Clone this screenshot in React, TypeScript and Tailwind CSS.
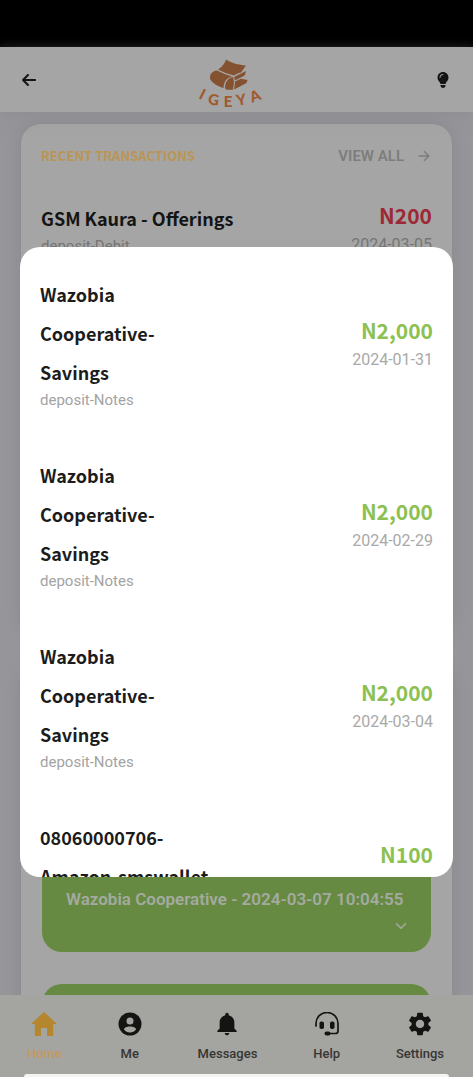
import React from "react";
import { IoArrowForward, IoChevronDown } from "react-icons/io5";
import { IoMdHome, IoMdNotifications } from "react-icons/io";
import { FaArrowLeft, FaLightbulb } from "react-icons/fa6";
import { MdSettings } from "react-icons/md";

type Transaction = {
  id: number;
  title: string;
  note?: string;
  amount: string;
  date?: string;
};

const transactions: Transaction[] = [
  { id: 1, title: "Wazobia Cooperative-Savings", note: "deposit-Notes", amount: "N2,000", date: "2024-01-31" },
  { id: 2, title: "Wazobia Cooperative-Savings", note: "deposit-Notes", amount: "N2,000", date: "2024-02-29" },
  { id: 3, title: "Wazobia Cooperative-Savings", note: "deposit-Notes", amount: "N2,000", date: "2024-03-04" },
  { id: 4, title: "08060000706-Amazon-smswallet", amount: "N100" },
];

function Logo() {
  return (
    <svg viewBox="0 0 66 54" className="h-[54px] w-[66px]" role="img" aria-label="Igeya">
      <path d="M29 4.500 C34 8 42 10 49 10.500 C47 13 46 15 44 17.500 C41 18 39 19 37 20.500 C31 19 26 17 21 14.500 C25 12 28 8 29 4.500Z" fill="#845230" />
      <path d="M20 15.500 C25 18 30 20 35 21.500 C29 23 27 27 26.500 33 C20 31 16 28 13.500 25 C11.500 20 15 16 20 15.500Z" fill="#845230" />
      <path d="M37 22 L49 16 L48 20 L43 23.500 L50.500 25 L49.500 28 L38 34 C33 35.500 28 35 28 33 C28 27 31 22.500 37 22Z" fill="#845230" />
      <path d="M36.500 22 C38 25 37.500 30 36.500 34.500 M38 26 L43 23.500 L50 20.500" fill="none" stroke="#aaa49f" strokeWidth="1.100" />
      <g fill="#a05a30" fontFamily="Lato, sans-serif" fontWeight="900" fontSize="15" textAnchor="middle">
        <text transform="translate(3 44) rotate(27)">I</text>
        <text transform="translate(16 50) rotate(8)">G</text>
        <text transform="translate(31 52)">E</text>
        <text transform="translate(45 50) rotate(-10)">Y</text>
        <text transform="translate(60 46) rotate(-20)">A</text>
      </g>
    </svg>
  );
}

function AccountIcon() {
  return (
    <svg viewBox="0 0 24 24" className="size-6">
      <circle cx="12" cy="12" r="11.5" fill="currentColor" />
      <circle cx="12" cy="9" r="3.5" fill="#a4a4a1" />
      <path d="M12 14.500c-3.200 0-6 1.200-6 2.900 1.400 2 3.500 3 6 3s4.600-1 6-3c0-1.700-2.800-2.900-6-2.900z" fill="#a4a4a1" />
    </svg>
  );
}

function HeadsetIcon() {
  return (
    <svg viewBox="0 0 24 24" className="size-6" fill="none" stroke="currentColor" strokeWidth="1.700" strokeLinecap="round">
      <path d="M1 14v-2.500a10.500 10.500 0 0 1 22 0V19q0 2.500-2.500 2.500H13" />
      <rect x="4.500" y="9.500" width="4.500" height="7.500" rx="1.800" fill="currentColor" stroke="none" />
      <rect x="15" y="9.500" width="4.500" height="7.500" rx="1.800" fill="currentColor" stroke="none" />
      <rect x="9.500" y="19.500" width="6" height="4" rx="2" fill="currentColor" stroke="none" />
    </svg>
  );
}

const heading = "font-['Noto_Sans_CJK_SC','Noto_Sans',sans-serif] font-bold";

function TransactionRow({ item }: { item: Transaction }) {
  return (
    <li className="flex items-center justify-between">
      <div className="w-[45%]">
        <h3 className={`${heading} text-[18px] leading-[39px] text-[#1c1c1c]`}>{item.title}</h3>
        <p className="h-4 text-[15px] leading-4 text-[#a3a3a3]">{item.note}</p>
      </div>
      <div className="pt-1 text-right">
        <p className={`${heading} text-[21px] leading-8 text-[#8cc152]`}>{item.amount}</p>
        <p className="mt-0.5 h-6 text-[16px] leading-6 text-[#a9a9a9]">{item.date}</p>
      </div>
    </li>
  );
}

const tabs = [
  { label: "Home", icon: <IoMdHome className="size-8" />, active: true },
  { label: "Me", icon: <AccountIcon /> },
  { label: "Messages", icon: <IoMdNotifications className="size-7" /> },
  { label: "Help", icon: <HeadsetIcon /> },
  { label: "Settings", icon: <MdSettings className="size-7" /> },
];

export default function App() {
  return (
    <div className="relative flex h-screen flex-col overflow-hidden bg-[#96959a] font-[Roboto,sans-serif]">
      <div className="z-10 h-[47px] shrink-0 bg-black" />
      <header className="z-10 flex h-[65px] shrink-0 items-center justify-between bg-[#a5a5a5] pr-[22px] pl-[21px] text-[#141414] shadow-[0_4px_12px_#8c8b9099]">
        <button aria-label="Back" className="flex w-6 items-center"><FaArrowLeft className="size-4" /></button>
        <div className="pt-1"><Logo /></div>
        <button aria-label="Tips" className="flex w-9 items-center justify-end"><FaLightbulb className="size-4" /></button>
      </header>

      <main className="flex min-h-0 flex-1 flex-col gap-8 overflow-hidden px-[21px] pt-3">
        <section className="h-[510px] shrink-0 rounded-[20px] bg-[#a5a5a5] px-5 pt-5 shadow-[0_0_16px_#88878c]">
          <div className="flex items-center justify-between">
            <h2 className={`${heading} text-[13px] leading-6 text-[#bb9553]`}>RECENT TRANSACTIONS</h2>
            <a href="#all" className="flex items-center gap-3 text-[15px] leading-6 font-semibold text-[#7d7d7d]">
              VIEW ALL <IoArrowForward className="size-4" />
            </a>
          </div>
          <div className="mt-[31px] flex justify-between">
            <div>
              <h3 className={`${heading} text-[18px] leading-[39px] text-[#141414]`}>GSM Kaura - Offerings</h3>
              <p className="text-[15px] leading-4 text-[#757575]">deposit-Debit</p>
            </div>
            <div className="text-right">
              <p className={`${heading} text-[21px] leading-8 text-[#9c2935]`}>N200</p>
              <p className="mt-0.5 text-[16px] leading-6 text-[#757575]">2024-03-05</p>
            </div>
          </div>
        </section>

        <section className="shrink-0 rounded-[20px] bg-[#a5a5a5] px-[21px] pt-[187px] shadow-[0_0_16px_#88878c]">
          <div className="flex flex-col gap-8">
            <button className="flex flex-col rounded-[20px] bg-[#668a42] pt-8 pr-[22px] pb-[18px] pl-6 text-left text-[17px] leading-7 font-semibold text-[#a5aaa0]">
              <span>Wazobia Cooperative - 2024-03-07 10:04:55</span>
              <IoChevronDown className="mt-[5px] size-4 self-end" />
            </button>
            <div className="h-24 rounded-[20px] bg-[#668a42]" />
          </div>
        </section>
      </main>

      <nav className="z-10 shrink-0 bg-[#a4a4a1]">
        <ul className="flex h-[79px] items-start justify-between pt-[14px] pr-[29px] pl-[27px]">
          {tabs.map((tab) => (
            <li key={tab.label}>
              <a href={`#${tab.label.toLowerCase()}`} className={`flex flex-col items-center gap-1 text-[13px] leading-[22px] font-medium ${tab.active ? "text-[#c39a62]" : "text-[#363633]"}`}>
                <span className={`flex h-[30px] items-center ${tab.active ? "text-[#b4862e]" : "text-[#141412]"}`}>{tab.icon}</span>
                {tab.label}
              </a>
            </li>
          ))}
        </ul>
        <div className="mx-6 h-[3px] rounded-t-lg bg-[#f4f4f4]" />
      </nav>

      <div className="absolute inset-x-0 top-[47px] bottom-0 z-20 flex items-center justify-center px-5">
        <div role="dialog" aria-label="Transactions" className="max-h-[61.2%] w-full overflow-hidden rounded-[20px] bg-white px-5 pt-7 pb-5">
          <ul className="flex flex-col gap-12">
            {transactions.map((item) => (
              <TransactionRow key={item.id} item={item} />
            ))}
          </ul>
        </div>
      </div>
    </div>
  );
}
